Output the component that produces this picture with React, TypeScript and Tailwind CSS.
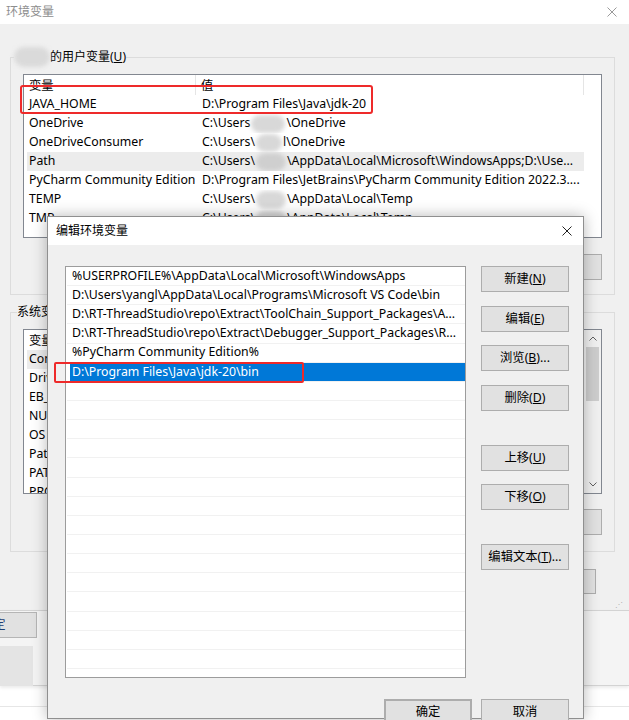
import type { ReactNode } from "react";

function CloseIcon({ className }: { className: string }) {
  return (
    <svg viewBox="0 0 10 10" className={className} fill="none" stroke="currentColor" strokeWidth="1">
      <path d="M0.5 0.5 L9.5 9.5 M9.5 0.5 L0.5 9.5" />
    </svg>
  );
}

function Blur({ className }: { className: string }) {
  return <span className={`inline-block rounded-full blur-[2px] ${className}`} />;
}

function Btn({ children, className = "" }: { children: ReactNode; className?: string }) {
  return (
    <div
      className={`flex h-[26px] w-[88px] items-center justify-center border border-[#adadad] bg-[#e1e1e1] text-[12.3px] text-black ${className}`}
    >
      {children}
    </div>
  );
}

const userVars: { name: string; value: ReactNode; selected?: boolean }[] = [
  { name: "JAVA_HOME", value: "D:\\Program Files\\Java\\jdk-20" },
  {
    name: "OneDrive",
    value: (
      <>
        C:\Users
        <Blur className="mx-[1px] h-[18px] w-[34px] bg-[#d8d8d8] align-middle" />
        \OneDrive
      </>
    ),
  },
  {
    name: "OneDriveConsumer",
    value: (
      <>
        C:\Users\
        <Blur className="mx-[1px] h-[18px] w-[26px] bg-[#d8d8d8] align-middle" />
        l\OneDrive
      </>
    ),
  },
  {
    name: "Path",
    selected: true,
    value: (
      <>
        C:\Users\
        <Blur className="mx-[1px] h-[18px] w-[30px] bg-[#cfcfcf] align-middle" />
        \AppData\Local\Microsoft\WindowsApps;D:\Use...
      </>
    ),
  },
  { name: "PyCharm Community Edition", value: "D:\\Program Files\\JetBrains\\PyCharm Community Edition 2022.3...." },
  {
    name: "TEMP",
    value: (
      <>
        C:\Users\
        <Blur className="mx-[1px] h-[18px] w-[30px] bg-[#d8d8d8] align-middle" />
        \AppData\Local\Temp
      </>
    ),
  },
  {
    name: "TMP",
    value: (
      <>
        C:\Users\
        <Blur className="mx-[1px] h-[18px] w-[30px] bg-[#d8d8d8] align-middle" />
        \AppData\Local\Temp
      </>
    ),
  },
];

const systemVars: { name: string; value: string; selected?: boolean }[] = [
  { name: "ComSpec", value: "C:\\Windows\\system32\\cmd.exe", selected: true },
  { name: "DriverData", value: "C:\\Windows\\System32\\Drivers\\DriverData" },
  { name: "EB_HOME", value: "D:\\EB" },
  { name: "NUMBER_OF_PROCESSORS", value: "16" },
  { name: "OS", value: "Windows_NT" },
  { name: "Path", value: "C:\\Windows\\system32;C:\\Windows" },
  { name: "PATHEXT", value: ".COM;.EXE;.BAT;.CMD;.VBS" },
  { name: "PROCESSOR_ARCHITECTURE", value: "AMD64" },
];

const pathItems = [
  "%USERPROFILE%\\AppData\\Local\\Microsoft\\WindowsApps",
  "D:\\Users\\yangl\\AppData\\Local\\Programs\\Microsoft VS Code\\bin",
  "D:\\RT-ThreadStudio\\repo\\Extract\\ToolChain_Support_Packages\\A...",
  "D:\\RT-ThreadStudio\\repo\\Extract\\Debugger_Support_Packages\\R...",
  "%PyCharm Community Edition%",
  "D:\\Program Files\\Java\\jdk-20\\bin",
];

function VarHeader() {
  return (
    <div className="flex h-[20px] items-center bg-white">
      <div className="h-full w-[172px] border-r border-[#e5e5e5] pl-[5px] leading-[21px]">变量</div>
      <div className="h-full w-[388px] border-r border-[#e5e5e5] pl-[5px] leading-[21px]">值</div>
    </div>
  );
}

function BackButtons() {
  return (
    <div className="flex justify-end gap-[8px]">
      <div className="h-[26px] w-[75px] border border-[#adadad] bg-[#e1e1e1]" />
      <div className="h-[26px] w-[75px] border border-[#adadad] bg-[#e1e1e1]" />
      <div className="h-[26px] w-[75px] border border-[#adadad] bg-[#e1e1e1]" />
    </div>
  );
}

export default function App() {
  return (
    <div className="relative h-[720px] w-[629px] overflow-hidden bg-white font-['Noto_Sans','Noto_Sans_CJK_SC',sans-serif] text-[12px] text-black">
      {/* 环境变量 (back window) */}
      <div className="flex h-[610px] flex-col bg-[#f0f0f0]">
        <div className="flex h-[24px] items-center justify-between bg-white pr-[12px] pl-[6px] text-[#8d8d8d]">
          <span>环境变量</span>
          <CloseIcon className="h-[10px] w-[10px] text-[#9a9a9a]" />
        </div>

        <div className="pl-[10px]">
          <fieldset className="mt-[25px] w-[605px] border border-[#dcdcdc] px-[12px] pt-[9px] pb-[14px]">
            <legend className="-ml-[9px] flex h-[16px] items-center">
              <Blur className="h-[20px] w-[36px] bg-[#dadada]" />
              <span>的用户变量(<u>U</u>)</span>
            </legend>
            <div className="h-[164px] overflow-hidden border border-[#828790] bg-white text-[12.3px]">
              <VarHeader />
              {userVars.map((v) => (
                <div
                  key={v.name}
                  className={`ml-[3px] flex h-[19px] w-[557px] items-center whitespace-nowrap ${v.selected ? "bg-[#ececec]" : ""}`}
                >
                  <div className="w-[175px] pl-[2px]">{v.name}</div>
                  <div className="flex-1 overflow-hidden">{v.value}</div>
                </div>
              ))}
            </div>
            <div className="mt-[16px]">
              <BackButtons />
            </div>
          </fieldset>

          <fieldset className="mt-[9px] w-[605px] border border-[#dcdcdc] px-[12px] pt-[9px] pb-[16px]">
            <legend className="-ml-[6px] h-[16px] leading-[16px]">系统变量(<u>S</u>)</legend>
            <div className="flex h-[165px] overflow-hidden border border-[#828790] bg-white text-[12.3px]">
              <div className="flex-1">
                <VarHeader />
                {systemVars.map((v) => (
                  <div
                    key={v.name}
                    className={`ml-[3px] flex h-[19px] w-[557px] items-center whitespace-nowrap ${v.selected ? "bg-[#ececec]" : ""}`}
                  >
                    <div className="w-[175px] pl-[2px]">{v.name}</div>
                    <div className="flex-1 overflow-hidden">{v.value}</div>
                  </div>
                ))}
              </div>
              <div className="flex w-[17px] flex-col bg-[#f0f0f0]">
                <div className="flex h-[17px] items-center justify-center text-[#606060]">
                  <svg viewBox="0 0 8 5" className="h-[5px] w-[8px]" fill="none" stroke="currentColor">
                    <path d="M0.5 4.5 L4 1 L7.5 4.5" />
                  </svg>
                </div>
                <div className="mx-[2px] h-[54px] bg-[#cdcdcd]" />
                <div className="flex-1" />
                <div className="flex h-[17px] items-center justify-center text-[#606060]">
                  <svg viewBox="0 0 8 5" className="h-[5px] w-[8px]" fill="none" stroke="currentColor">
                    <path d="M0.5 0.5 L4 4 L7.5 0.5" />
                  </svg>
                </div>
              </div>
            </div>
            <div className="mt-[15px]">
              <BackButtons />
            </div>
          </fieldset>

          <div className="mt-[17px] flex w-[586px] justify-end gap-[8px]">
            <div className="h-[25px] w-[75px] border border-[#adadad] bg-[#e1e1e1]" />
            <div className="h-[25px] w-[75px] border border-[#adadad] bg-[#e1e1e1]" />
          </div>
        </div>

        <div className="flex flex-1 justify-end pr-[6px]">
          <div className="mt-auto mb-[2px] text-[8px] leading-none text-[#b0b0b0]">⋰</div>
        </div>
      </div>

      {/* window behind, bottom strip */}
      <div className="h-[76px] border-t border-b border-[#d3d3d3] bg-[#f4f4f4] shadow-[0_2px_3px_rgba(0,0,0,0.08)]">
        <div className="-ml-[50px] mt-[1px] flex h-[26px] w-[87px] items-center justify-center border border-[#b5b5b5] bg-[#e1e1e1] text-[#1f3f73]">
          确定
        </div>
        <div className="mt-[8px] h-[40px] w-[33px] bg-[#e4e4e4]" />
      </div>
      <div className="mt-[20px] h-px bg-[#e6e6e6]" />

      {/* red mark on JAVA_HOME */}
      <div className="absolute top-[85px] left-[20px] h-[29px] w-[353px] rounded-[3px] border-2 border-[#ee2a2a]" />

      {/* 编辑环境变量 (front window) */}
      <div className="absolute top-[216px] left-[47px] flex h-[503px] w-[537px] flex-col border border-[#8f8f8f] bg-[#f0f0f0] shadow-[0_0_14px_rgba(0,0,0,0.28)]">
        <div className="flex h-[28px] shrink-0 items-center justify-between bg-white pr-[11px] pl-[8px]">
          <span>编辑环境变量</span>
          <CloseIcon className="h-[10px] w-[10px] text-[#222]" />
        </div>

        <div className="flex pt-[21px] pl-[17px]">
          <div className="h-[412px] w-[401px] overflow-hidden border border-[#9c9c9c] bg-white text-[12.3px]">
            {Array.from({ length: 22 }).map((_, i) => {
              const text = pathItems[i];
              const selected = i === 5;
              return (
                <div key={i} className="ml-[1px] flex h-[19.15px] items-stretch border-b border-[#f1f1f1]">
                  <div
                    className={`ml-[3px] flex flex-1 items-center pl-[2px] whitespace-nowrap ${selected ? "bg-[#0078d7] text-white" : ""}`}
                  >
                    {text ?? ""}
                  </div>
                </div>
              );
            })}
          </div>

          <div className="ml-[15px] flex flex-col">
            <Btn>
              新建(<u>N</u>)
            </Btn>
            <Btn className="mt-[14px]">
              编辑(<u>E</u>)
            </Btn>
            <Btn className="mt-[13px]">
              浏览(<u>B</u>)...
            </Btn>
            <Btn className="mt-[14px]">
              删除(<u>D</u>)
            </Btn>
            <Btn className="mt-[34px]">
              上移(<u>U</u>)
            </Btn>
            <Btn className="mt-[13px]">
              下移(<u>O</u>)
            </Btn>
            <Btn className="mt-[34px]">
              编辑文本(<u>T</u>)...
            </Btn>
          </div>
        </div>

        <div className="mt-[21px] flex justify-end gap-[9px] pr-[14px]">
          <Btn className="w-[87px] border-2 border-[#0078d7]">确定</Btn>
          <Btn>取消</Btn>
        </div>

        {/* red mark on the new entry */}
        <div className="absolute top-[145px] left-[6px] h-[21px] w-[250px] rounded-[2px] border-2 border-[#ee2a2a]" />
      </div>
    </div>
  );
}
